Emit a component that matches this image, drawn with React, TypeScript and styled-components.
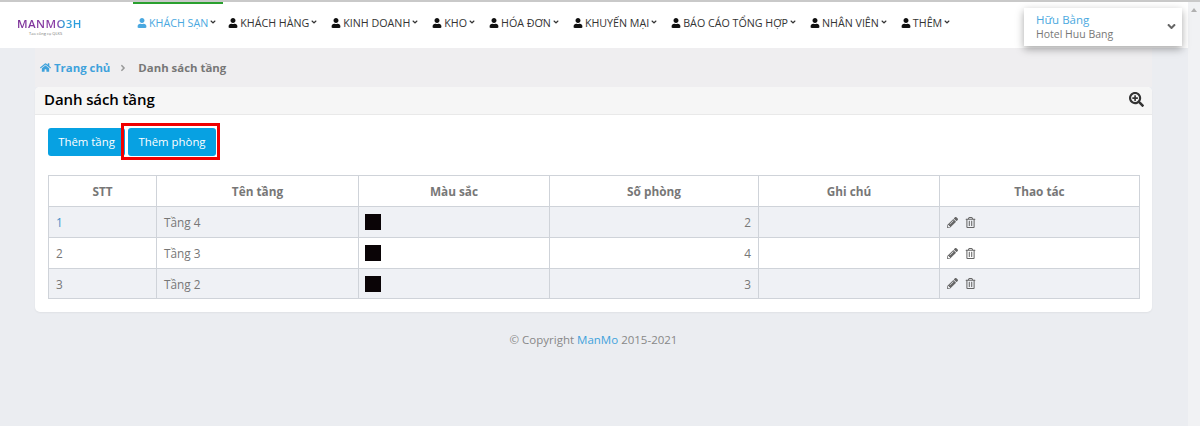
import React from "react";
import styled, { createGlobalStyle } from "styled-components";
import {
  FaUser,
  FaHome,
  FaSearchPlus,
  FaPencilAlt,
  FaRegTrashAlt,
  FaAngleDown,
  FaAngleRight,
} from "react-icons/fa";

const GlobalStyle = createGlobalStyle`
  html, body {
    margin: 0;
    height: 426px;
    overflow: hidden;
    background: #ebedf1;
    font-family: "Open Sans", "Liberation Sans", sans-serif;
  }
`;

const Shell = styled.div`
  display: flex;
  height: 426px;
  border-top: 2px solid #c9c9c9;
  box-sizing: border-box;
`;

const Main = styled.div`
  width: 1188px;
  flex: none;
`;

const ScrollTrack = styled.div`
  flex: 1;
  background: #f1f2f4;
  display: flex;
  justify-content: center;
  padding-top: 6px;
`;

const ScrollArrow = styled.div`
  width: 0;
  height: 0;
  border-left: 3px solid transparent;
  border-right: 3px solid transparent;
  border-bottom: 4px solid #b0b0b0;
`;

const Header = styled.header`
  height: 46px;
  background: #fff;
  display: flex;
  align-items: flex-start;
  position: relative;
`;

const Logo = styled.div`
  width: 133px;
  flex: none;
  padding: 16px 0 0 17px;
  box-sizing: border-box;
`;

const LogoMark = styled.div`
  font-size: 11.5px;
  line-height: 12px;
  font-weight: 600;
  letter-spacing: 0.4px;
  width: fit-content;
  background: linear-gradient(90deg, #7a2f96 0%, #8c3fa8 62%, #2f9fd8 72%, #2a9ee0 100%);
  -webkit-background-clip: text;
  background-clip: text;
  color: transparent;
`;

const LogoTag = styled.div`
  font-size: 4px;
  line-height: 5px;
  color: #777;
  margin: 1px 0 0 12px;
`;

const Nav = styled.nav`
  display: flex;
  flex: 1;
`;

const NavItem = styled.a<{ $active?: boolean }>`
  display: flex;
  align-items: center;
  height: 40px;
  padding: 0 ${(p) => (p.$active ? "6px" : "4px")} 0 4px;
  margin-right: ${(p) => (p.$active ? "1px" : "5px")};
  font-size: 10.7px;
  white-space: nowrap;
  color: ${(p) => (p.$active ? "#4aa8e0" : "#333")};
  border-top: 2px solid ${(p) => (p.$active ? "#2aa02f" : "transparent")};
  box-sizing: border-box;
  svg:first-child {
    width: 10px;
    height: 10px;
    margin-right: 2px;
    color: ${(p) => (p.$active ? "#4aa8e0" : "#111")};
  }
  svg:last-child {
    width: 8px;
    height: 8px;
    margin: -2px 0 0 1px;
    color: #333;
  }
`;

const UserBox = styled.div`
  position: absolute;
  left: 1024px;
  top: 6px;
  width: 158px;
  height: 38px;
  background: #fff;
  box-shadow: 0 3px 8px rgba(0, 0, 0, 0.35);
  padding: 5px 0 0 12px;
  box-sizing: border-box;
  line-height: 14px;
`;

const UserName = styled.div`
  font-size: 11.5px;
  color: #4aa8e0;
`;

const UserHotel = styled.div`
  font-size: 10.5px;
  color: #777;
`;

const UserCaret = styled(FaAngleDown)`
  position: absolute;
  right: 4px;
  top: 12px;
  width: 13px;
  height: 13px;
  color: #666;
`;

const Body = styled.div`
  padding: 0 36px 0 35px;
`;

const Breadcrumb = styled.div`
  height: 39px;
  background: #efeef0;
  display: flex;
  align-items: center;
  padding-left: 5px;
  font-size: 11.4px;
  font-weight: 700;
  color: #777;
`;

const Crumb = styled.span`
  color: #3fa2dc;
  display: flex;
  align-items: center;
  gap: 3px;
  svg {
    width: 11px;
    height: 11px;
  }
`;

const CrumbSeparator = styled(FaAngleRight)`
  width: 10px;
  height: 10px;
  margin: 0 10px 0 8px;
  color: #999;
`;

const Card = styled.section`
  background: #fff;
  border-radius: 5px;
  height: 225px;
  box-shadow: 0 1px 2px rgba(0, 0, 0, 0.05);
`;

const CardHead = styled.div`
  height: 28px;
  background: #f6f6f6;
  border-bottom: 1px solid #e9e9e9;
  border-radius: 5px 5px 0 0;
  box-sizing: border-box;
  display: flex;
  align-items: center;
  justify-content: space-between;
  padding: 0 8px 3px 9px;
`;

const CardTitle = styled.h3`
  margin: 0;
  font-size: 15px;
  font-weight: 600;
  color: #000;
  letter-spacing: -0.1px;
`;

const ZoomIcon = styled(FaSearchPlus)`
  width: 15px;
  height: 15px;
  color: #333;
`;

const CardBody = styled.div`
  padding: 13px 13px 0;
`;

const Toolbar = styled.div`
  display: flex;
  gap: 3px;
  margin-bottom: 19px;
  position: relative;
`;

const Button = styled.button<{ $width: number }>`
  width: ${(p) => p.$width}px;
  height: 28px;
  border: none;
  border-radius: 3px;
  padding: 0 0 2px;
  background: #07a1e2;
  color: #fff;
  font-family: inherit;
  font-size: 11.4px;
`;

const Highlight = styled.div`
  position: absolute;
  left: 73px;
  top: -5px;
  width: 99px;
  height: 37px;
  border: 3px solid #f00000;
  box-sizing: border-box;
`;

const Table = styled.table`
  width: 1091px;
  table-layout: fixed;
  border-collapse: collapse;
  font-size: 11.8px;
  color: #777;
  th, td {
    border: 1px solid #cfd3d9;
    box-sizing: border-box;
    height: 31px;
    padding: 0 7px;
  }
  th {
    font-weight: 700;
    text-align: center;
    color: #777;
  }
  tbody tr:nth-child(odd) {
    background: #eff1f5;
  }
  tbody tr:last-child td {
    height: 30px;
  }
`;

const NumberCell = styled.td`
  text-align: right;
`;

const RowLink = styled.span<{ $link?: boolean }>`
  color: ${(p) => (p.$link ? "#3f8fc8" : "#777")};
`;

const Swatch = styled.div<{ $color: string }>`
  width: 16px;
  height: 16px;
  margin-left: -1px;
  background: ${(p) => p.$color};
`;

const Actions = styled.div`
  display: flex;
  align-items: center;
  gap: 7px;
  color: #666;
  svg {
    width: 11px;
    height: 11px;
  }
`;

const Footer = styled.footer`
  text-align: center;
  font-size: 11.5px;
  color: #888;
  margin-top: 20px;
  line-height: 16px;
`;

const FooterLink = styled.span`
  color: #3fa2dc;
`;

const navItems = [
  "KHÁCH HÀNG",
  "KINH DOANH",
  "KHO",
  "HÓA ĐƠN",
  "KHUYẾN MẠI",
  "BÁO CÁO TỔNG HỢP",
  "NHÂN VIÊN",
  "THÊM",
];

const rows = [
  { stt: 1, name: "Tầng 4", rooms: 2 },
  { stt: 2, name: "Tầng 3", rooms: 4 },
  { stt: 3, name: "Tầng 2", rooms: 3 },
];

const columnWidths = [108, 202, 191, 209, 181, 200];

export default function App() {
  return (
    <>
      <GlobalStyle />
      <Shell>
        <Main>
          <Header>
            <Logo>
              <LogoMark>MANMO3H</LogoMark>
              <LogoTag>Tao công cụ QLKS</LogoTag>
            </Logo>
            <Nav>
              <NavItem $active>
                <FaUser />
                KHÁCH SẠN
                <FaAngleDown />
              </NavItem>
              {navItems.map((item) => (
                <NavItem key={item}>
                  <FaUser />
                  {item}
                  <FaAngleDown />
                </NavItem>
              ))}
            </Nav>
            <UserBox>
              <UserName>Hữu Bằng</UserName>
              <UserHotel>Hotel Huu Bang</UserHotel>
              <UserCaret />
            </UserBox>
          </Header>
          <Body>
            <Breadcrumb>
              <Crumb>
                <FaHome />
                Trang chủ
              </Crumb>
              <CrumbSeparator />
              Danh sách tầng
            </Breadcrumb>
            <Card>
              <CardHead>
                <CardTitle>Danh sách tầng</CardTitle>
                <ZoomIcon />
              </CardHead>
              <CardBody>
                <Toolbar>
                  <Button $width={77}>Thêm tầng</Button>
                  <Button $width={88}>Thêm phòng</Button>
                  <Highlight />
                </Toolbar>
                <Table>
                  <colgroup>
                    {columnWidths.map((w, i) => (
                      <col key={i} width={w} />
                    ))}
                  </colgroup>
                  <thead>
                    <tr>
                      <th>STT</th>
                      <th>Tên tầng</th>
                      <th>Màu sắc</th>
                      <th>Số phòng</th>
                      <th>Ghi chú</th>
                      <th>Thao tác</th>
                    </tr>
                  </thead>
                  <tbody>
                    {rows.map((row) => (
                      <tr key={row.stt}>
                        <td>
                          <RowLink $link={row.stt === 1}>{row.stt}</RowLink>
                        </td>
                        <td>{row.name}</td>
                        <td>
                          <Swatch $color="#0a0406" />
                        </td>
                        <NumberCell>{row.rooms}</NumberCell>
                        <td />
                        <td>
                          <Actions>
                            <FaPencilAlt />
                            <FaRegTrashAlt />
                          </Actions>
                        </td>
                      </tr>
                    ))}
                  </tbody>
                </Table>
              </CardBody>
            </Card>
            <Footer>
              © Copyright <FooterLink>ManMo</FooterLink> 2015-2021
            </Footer>
          </Body>
        </Main>
        <ScrollTrack>
          <ScrollArrow />
        </ScrollTrack>
      </Shell>
    </>
  );
}
